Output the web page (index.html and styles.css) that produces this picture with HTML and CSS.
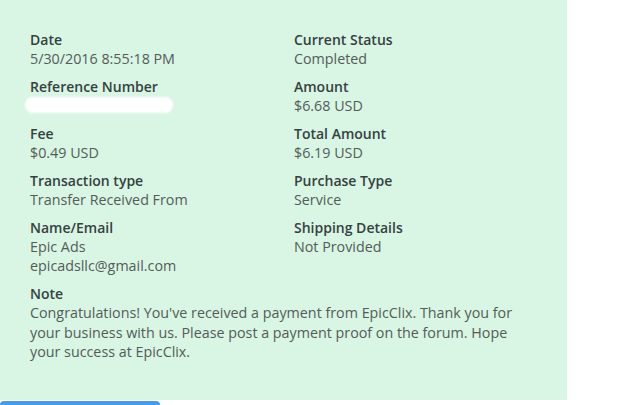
FILE: index.html
```html
<!DOCTYPE html>
<html lang="en">
<head>
    <meta charset="UTF-8">
    <meta name="viewport" content="width=device-width, initial-scale=1.0">
    <title>Transaction Details</title>
    <link rel="stylesheet" href="styles.css">
</head>
<body>

    <div class="panel">
        <div class="details">
            <div class="item">
                <div class="label">Date</div>
                <div class="value">5/30/2016 8:55:18 PM</div>
            </div>
            <div class="item">
                <div class="label">Current Status</div>
                <div class="value">Completed</div>
            </div>
            <div class="item">
                <div class="label">Reference Number</div>
                <div class="value"><span class="hidden-ref"></span></div>
            </div>
            <div class="item">
                <div class="label">Amount</div>
                <div class="value">$6.68 USD</div>
            </div>
            <div class="item">
                <div class="label">Fee</div>
                <div class="value">$0.49 USD</div>
            </div>
            <div class="item">
                <div class="label">Total Amount</div>
                <div class="value">$6.19 USD</div>
            </div>
            <div class="item">
                <div class="label">Transaction type</div>
                <div class="value">Transfer Received From</div>
            </div>
            <div class="item">
                <div class="label">Purchase Type</div>
                <div class="value">Service</div>
            </div>
            <div class="item">
                <div class="label">Name/Email</div>
                <div class="value">Epic Ads</div>
                <div class="value">epicadsllc@gmail.com</div>
            </div>
            <div class="item">
                <div class="label">Shipping Details</div>
                <div class="value">Not Provided</div>
            </div>
        </div>

        <div class="note">
            <div class="label">Note</div>
            <div class="value">Congratulations! You've received a payment from EpicClix. Thank you for your business with us. Please post a payment proof on the forum. Hope your success at EpicClix.</div>
        </div>
    </div>

    <div class="bottom-button"></div>

</body>
</html>
```

FILE: styles.css
```css
body {
    margin: 0;
    background-color: #fff;
    font-family: 'Open Sans', 'Noto Sans', sans-serif;
    font-size: 14px;
    line-height: 19px;
}
.panel {
    width: 537px;
    height: 370px;
    padding: 30px 0 0 30px;
    background-color: #d9f5e4;
}
.details {
    display: grid;
    grid-template-columns: 264px 1fr;
    row-gap: 9px;
}
.label {
    color: #34423f;
    font-weight: 600;
}
.value {
    color: #535c58;
    font-size: 14.3px;
}
.hidden-ref {
    display: inline-block;
    width: 148px;
    height: 16px;
    margin: 1px 0 0 -5px;
    background-color: #fff;
    border-radius: 8px;
    filter: blur(1px);
    vertical-align: top;
}
.note {
    margin-top: 9px;
    max-width: 510px;
}
.note .value {
    line-height: 19.7px;
}
.bottom-button {
    width: 160px;
    height: 6px;
    margin-top: 1px;
    background-color: #4a9be6;
    border-radius: 4px 4px 0 0;
}
```
